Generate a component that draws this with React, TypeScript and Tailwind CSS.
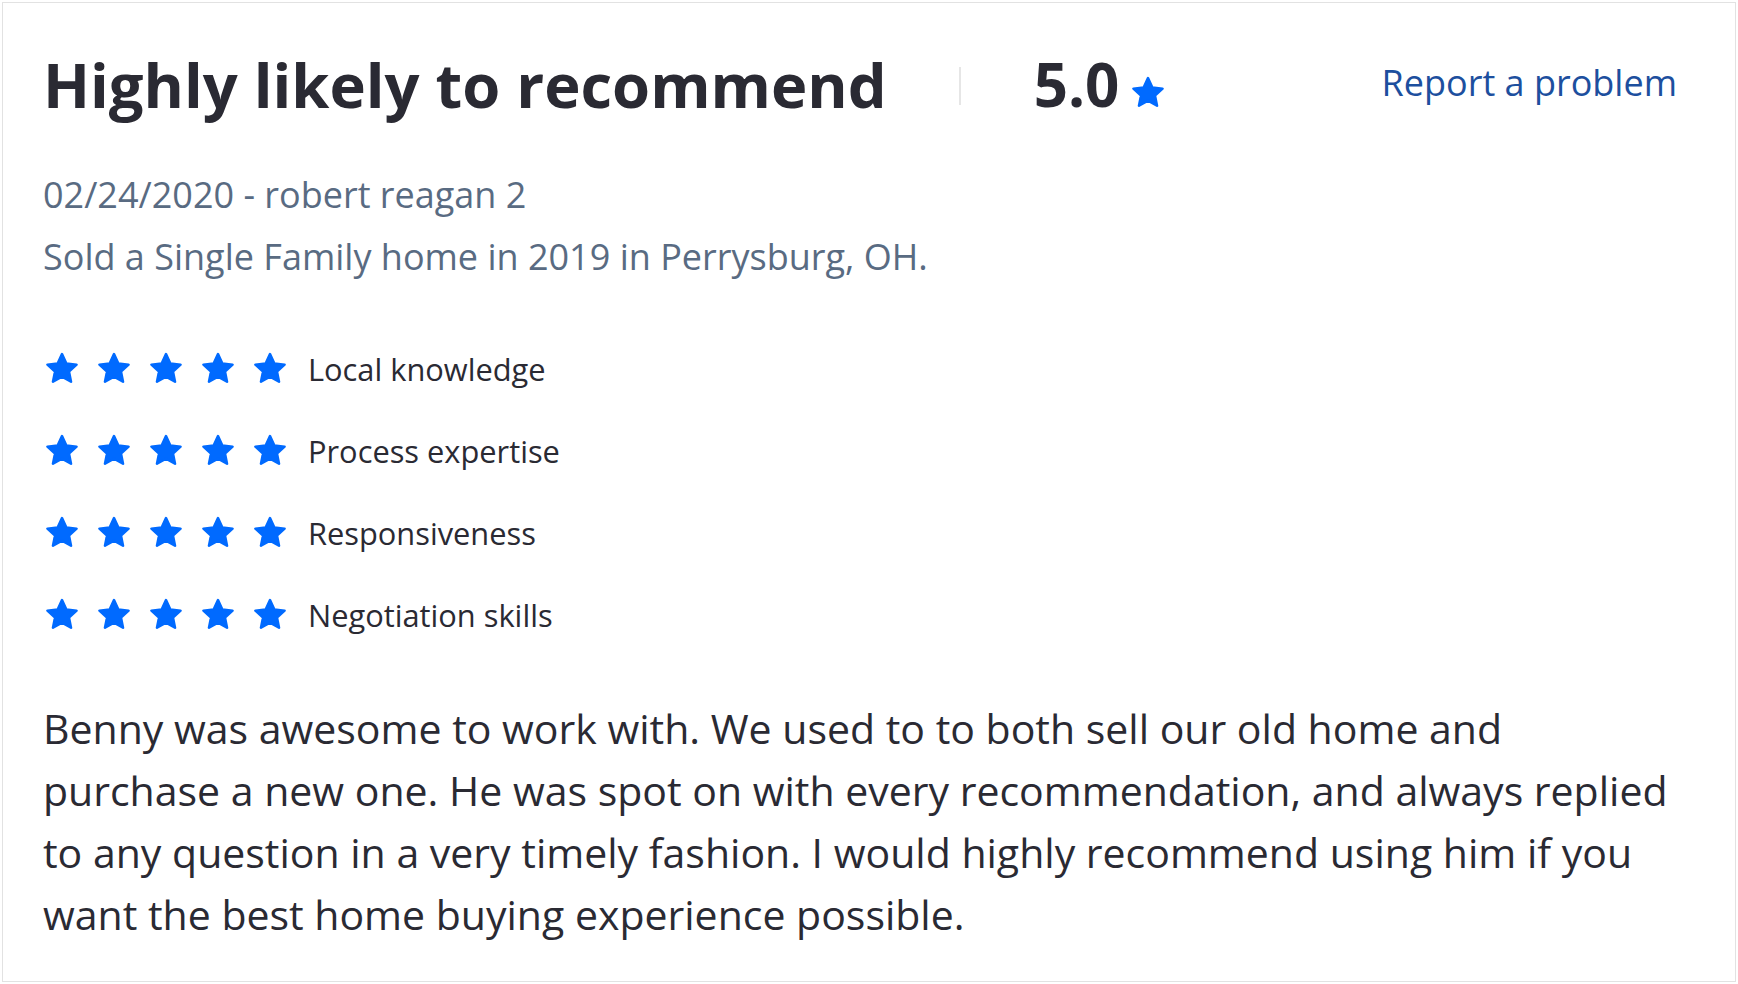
import React from 'react';

// Review card: header, reviewer meta, per-category ratings and review text

const CATEGORIES = ['Local knowledge', 'Process expertise', 'Responsiveness', 'Negotiation skills'];

const REVIEW_TEXT =
  'Benny was awesome to work with. We used to to both sell our old home and purchase a new one. He was spot on with every recommendation, and always replied to any question in a very timely fashion. I would highly recommend using him if you want the best home buying experience possible.';

function Star({ className }: { className?: string }) {
  return (
    <svg viewBox="0 0 24 24" className={className} aria-hidden="true">
      <path
        d="M12 2.6l2.75 5.9 6.45.75-4.8 4.4 1.3 6.35L12 16.8 6.3 20l1.3-6.35-4.8-4.4 6.45-.75z"
        fill="#006aff"
        stroke="#006aff"
        strokeWidth="1.6"
        strokeLinejoin="round"
      />
    </svg>
  );
}

function RatingRow({ label }: { label: string }) {
  return (
    <div className="flex h-[36px] items-center">
      <div className="flex items-center gap-[14px]">
        {[0, 1, 2, 3, 4].map((i) => (
          <Star key={i} className="h-[38px] w-[38px]" />
        ))}
      </div>
      <span className="ml-[19px] text-[30.8px] leading-none text-[#2a2a33]">{label}</span>
    </div>
  );
}

export default function App() {
  return (
    <div className="min-h-screen bg-white p-[2px]" style={{ fontFamily: '"Open Sans", "Noto Sans", sans-serif' }}>
      <div className="min-h-[980px] border border-[#e2e2e2] pb-[35px] pl-[40px] pr-[58px] pt-[45px]">
        {/* Header */}
        <div className="flex items-start justify-between">
          <div className="flex items-center">
            <h1 className="text-[61.5px] font-bold leading-[72px] text-[#2a2a33]">
              Highly likely to recommend
            </h1>
            <div className="ml-[72px] mt-[4px] h-[38px] w-[2px] bg-[#e6e6e6]" />
            <div className="ml-[73px] flex items-center">
              <span className="text-[60px] font-bold leading-[72px] text-[#2a2a33]">5.0</span>
              <Star className="ml-[10px] mt-[18px] h-[38px] w-[38px]" />
            </div>
          </div>
          <a href="#" className="mt-[4px] text-[36px] leading-[62px] text-[#1d4f9e]">
            Report a problem
          </a>
        </div>

        {/* Reviewer */}
        <div className="mt-[44px] text-[36px] leading-[62px] text-[#596b82]">
          <div>02/24/2020 - robert reagan 2</div>
          <div>Sold a Single Family home in 2019 in Perrysburg, OH.</div>
        </div>

        {/* Ratings */}
        <div className="mt-[63px] flex flex-col gap-[46px]">
          {CATEGORIES.map((c) => (
            <RatingRow key={c} label={c} />
          ))}
        </div>

        {/* Body */}
        <p className="mt-[64px] max-w-[1640px] text-[41px] leading-[62px] text-[#2a2a33]">{REVIEW_TEXT}</p>
      </div>
    </div>
  );
}
